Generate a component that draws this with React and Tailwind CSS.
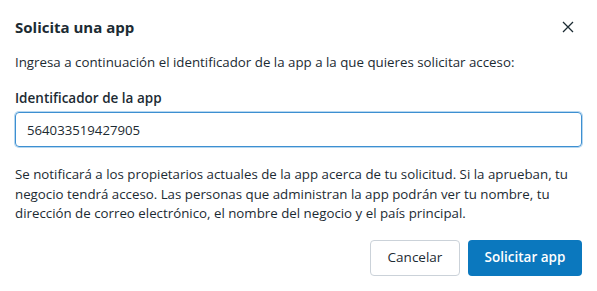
import React, { useState } from "react";

const SolicitaApp = () => {
  const [appId, setAppId] = useState("564033519427905");

  return (
    <div
      className="w-[597px] h-[291px] bg-white text-[#1c2b33] px-[15px]"
      style={{ fontFamily: '"Open Sans", "Noto Sans", sans-serif' }}
    >
      {/* Header */}
      <div className="flex items-center justify-between pt-[14px] h-[40px]">
        <h2 className="text-[15px] font-bold leading-[22px]">Solicita una app</h2>
        <button className="w-[24px] h-[24px] flex items-center justify-center mr-[2px] text-[#1c2b33]">
          <svg width="12" height="12" viewBox="0 0 12 12" fill="none" stroke="currentColor" strokeWidth="1.3">
            <path d="M1 1L11 11M11 1L1 11" />
          </svg>
        </button>
      </div>

      <p className="text-[13.3px] leading-[20px] mt-[12px]">
        Ingresa a continuación el identificador de la app a la que quieres solicitar acceso:
      </p>

      <label className="block text-[13.5px] font-semibold leading-[20px] mt-[16px]">
        Identificador de la app
      </label>
      <input
        type="text"
        value={appId}
        onChange={(e) => setAppId(e.target.value)}
        className="mt-[4px] w-full h-[35px] px-[11px] text-[13.2px] text-[#1c2b33] border border-[#3d8fd1] rounded-[4px] shadow-[0_0_0_1px_#b6d7f0] outline-none"
      />

      <p className="text-[13.3px] leading-[19.5px] mt-[18px]">
        Se notificará a los propietarios actuales de la app acerca de tu solicitud. Si la aprueban, tu
        negocio tendrá acceso. Las personas que administran la app podrán ver tu nombre, tu
        dirección de correo electrónico, el nombre del negocio y el país principal.
      </p>

      {/* Footer */}
      <div className="flex justify-end gap-[8px] mt-[16px]">
        <button className="h-[36px] w-[90px] text-[13.5px] border border-[#cbd2d9] rounded-[4px] bg-white">
          Cancelar
        </button>
        <button className="h-[36px] w-[114px] text-[13.5px] font-semibold text-white bg-[#0b78be] rounded-[4px]">
          Solicitar app
        </button>
      </div>
    </div>
  );
};

export default SolicitaApp;
